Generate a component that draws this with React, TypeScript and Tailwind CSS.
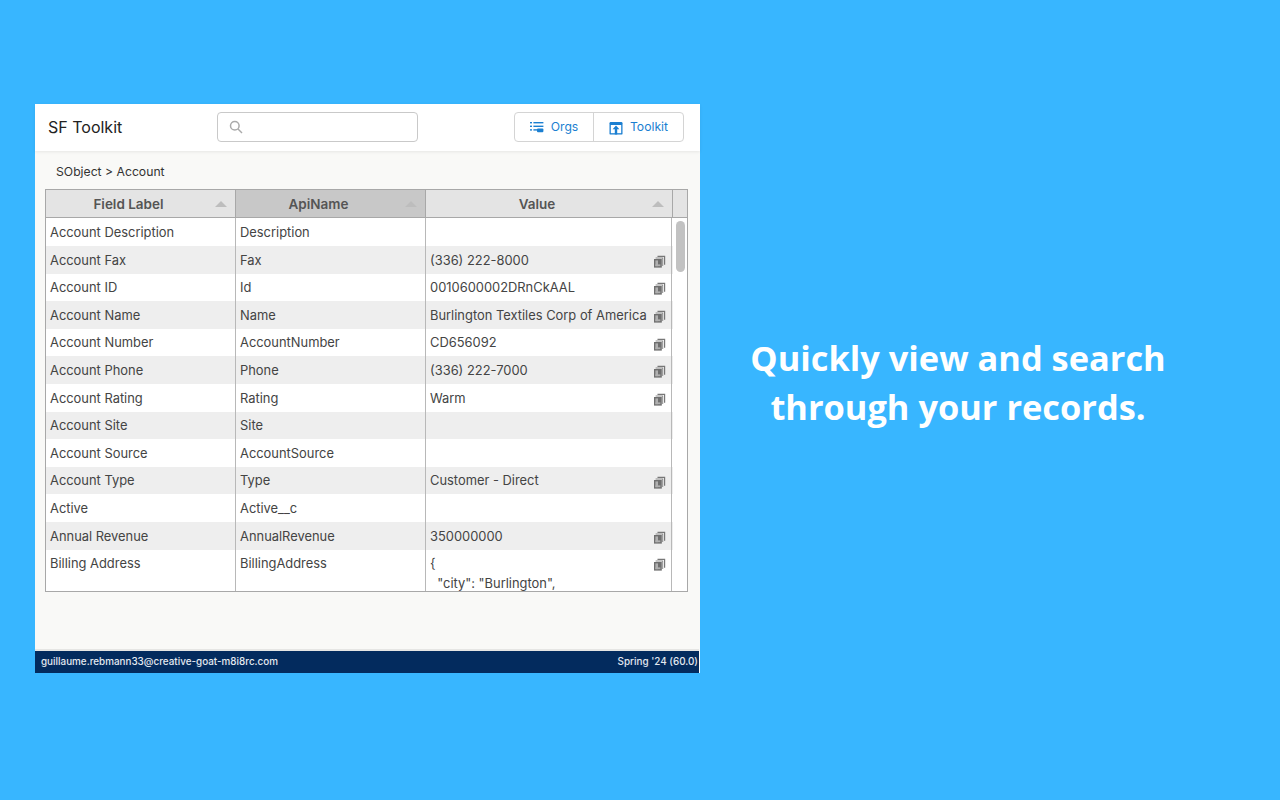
import React from "react";

const rows: [string, string, string, number][] = [
  ["Account Description", "Description", "", 28],
  ["Account Fax", "Fax", "(336) 222-8000", 27.6],
  ["Account ID", "Id", "0010600002DRnCkAAL", 27.6],
  ["Account Name", "Name", "Burlington Textiles Corp of America", 27.6],
  ["Account Number", "AccountNumber", "CD656092", 27.6],
  ["Account Phone", "Phone", "(336) 222-7000", 27.6],
  ["Account Rating", "Rating", "Warm", 27.6],
  ["Account Site", "Site", "", 27.6],
  ["Account Source", "AccountSource", "", 27.6],
  ["Account Type", "Type", "Customer - Direct", 27.6],
  ["Active", "Active__c", "", 27.6],
  ["Annual Revenue", "AnnualRevenue", "350000000", 27.6],
];

function CopyIcon() {
  return (
    <svg width="13" height="13" viewBox="0 0 13 13" className="shrink-0">
      <path d="M4.5 2V0.8h7.7v9h-1.2V2z" fill="#777" />
      <path d="M2.6 3.6V2.4h7.6v8.6H9.2V3.6z" fill="#8c8c8c" />
      <rect x="1" y="4" width="7.8" height="8.6" fill="#6f6f6f" />
      <rect x="2.4" y="5.4" width="2.6" height="5.8" fill="#b0b0b0" />
      <rect x="2.4" y="9.4" width="5" height="1.8" fill="#b0b0b0" />
    </svg>
  );
}

function OrgsIcon() {
  return (
    <svg width="14" height="12" viewBox="0 0 14 12" fill="#1b7fd1">
      <rect x="0" y="1" width="2" height="1.4" />
      <rect x="3.4" y="1" width="10" height="1.4" />
      <rect x="0" y="4.6" width="2" height="1.4" />
      <rect x="3.4" y="4.6" width="10" height="1.4" />
      <rect x="0" y="8.2" width="2" height="1.4" />
      <rect x="3.4" y="8.2" width="5" height="1.4" />
      <rect x="7" y="7.6" width="6.4" height="3.6" rx="1" />
    </svg>
  );
}

function ToolkitIcon() {
  return (
    <svg width="14" height="14" viewBox="0 0 14 14">
      <rect x="0.5" y="1" width="13" height="12.6" rx="1.2" fill="#1b7fd1" />
      <rect x="1.8" y="4" width="10.4" height="8.2" fill="#fff" />
      <path d="M7 4.6 10.4 8.2H8.2v5.4H5.8V8.2H3.6z" fill="#1b7fd1" />
    </svg>
  );
}

function SortArrow() {
  return <span className="w-0 h-0 border-x-[6px] border-x-transparent border-b-[6px] border-b-[#bdbdbd]" />;
}

function HeadCell({ label, className }: { label: string; className: string }) {
  return (
    <div className={`flex items-center justify-center relative font-semibold text-[13.5px] text-[#555] pr-[24px] pt-[1px] ${className}`}>
      {label}
      <span className="absolute right-[8px] top-[11px] flex"><SortArrow /></span>
    </div>
  );
}

export default function App() {
  return (
    <div className="w-[1280px] h-[800px] bg-[#38b6ff] flex items-start overflow-hidden font-['Inter',sans-serif]">
      <div className="ml-[35px] mt-[104px] w-[665px] h-[569px] bg-[#f9f9f7] flex flex-col shrink-0">
        <header className="h-[47px] bg-white flex items-center pl-[13px] pr-[16px] pb-[1px] shadow-[0_1px_3px_rgba(0,0,0,0.08)] shrink-0">
          <span className="text-[16px] text-[#222] w-[169px] leading-none">SF Toolkit</span>
          <div className="w-[201px] h-[30px] border border-[#c9c9c9] rounded-[4px] bg-white flex items-center pl-[11px]">
            <svg width="14" height="14" viewBox="0 0 14 14" fill="none" stroke="#aaa" strokeWidth="1.5">
              <circle cx="5.8" cy="5.8" r="4.3" />
              <path d="M9 9l4 4" />
            </svg>
          </div>
          <div className="ml-auto h-[30px] w-[170px] border border-[#d4d4d4] rounded-[4px] flex text-[12.2px] text-[#1b7fd1]">
            <div className="w-[79px] border-r border-[#d4d4d4] flex items-center justify-center gap-[7px]">
              <OrgsIcon />
              <span className="pt-[1px]">Orgs</span>
            </div>
            <div className="flex-1 flex items-center justify-center gap-[7px]">
              <span className="pt-[1px] flex"><ToolkitIcon /></span>
              <span className="pt-[1px]">Toolkit</span>
            </div>
          </div>
        </header>

        <div className="pl-[21px] pt-[13px] h-[38px] text-[12.2px] leading-[15px] text-[#333] shrink-0">SObject &gt; Account</div>

        <div className="mx-[10px] w-[643px] h-[403px] border border-[#a8a8a8] bg-white flex flex-col overflow-hidden shrink-0 mr-[12px]">
          <div className="flex h-[28px] border-b border-[#a8a8a8] shrink-0 bg-[#e4e4e4]">
            <HeadCell label="Field Label" className="w-[190px] border-r border-[#a8a8a8]" />
            <HeadCell label="ApiName" className="w-[190px] border-r border-[#a8a8a8] bg-[#c8c8c8]" />
            <HeadCell label="Value" className="w-[247px] border-r border-[#a8a8a8]" />
            <div className="flex-1" />
          </div>
          <div className="flex flex-1 min-h-0 text-[12.9px] text-[#444]">
            <div className="w-[627px] flex flex-col overflow-hidden">
              {rows.map(([label, api, value, h], i) => (
                <div
                  key={label}
                  style={{ height: h }}
                  className={`flex shrink-0 items-center ${i % 2 === 1 ? "bg-[#eeeeee]" : "bg-white"}`}
                >
                  <div className="w-[190px] h-full border-r border-[#b8b8b8] pl-[4px] pt-[1px] flex items-center">{label}</div>
                  <div className="w-[190px] h-full border-r border-[#b8b8b8] pl-[4px] pt-[1px] flex items-center">{api}</div>
                  <div className="w-[246px] h-full border-r border-[#b8b8b8] pl-[4px] pr-[5px] pt-[1px] flex items-center justify-between whitespace-nowrap">
                    <span>{value}</span>
                    {value && <span className="mt-[2px] flex"><CopyIcon /></span>}
                  </div>
                </div>
              ))}
              <div className="flex flex-1 min-h-0 bg-white">
                <div className="w-[190px] border-r border-[#b8b8b8] pl-[4px] pt-[5px] leading-[18px]">Billing Address</div>
                <div className="w-[190px] border-r border-[#b8b8b8] pl-[4px] pt-[5px] leading-[18px]">BillingAddress</div>
                <div className="w-[246px] border-r border-[#b8b8b8] pl-[4px] pr-[5px] pt-[4px] flex justify-between overflow-hidden leading-[20px]">
                  <span className="whitespace-pre">{'{\n  "city": "Burlington",'}</span>
                  <span className="mt-[4px] flex self-start"><CopyIcon /></span>
                </div>
              </div>
            </div>
            <div className="flex-1 bg-white pl-[3px] pt-[3px]">
              <div className="w-[9px] h-[51px] rounded-[5px] bg-[#c2c2c2]" />
            </div>
          </div>
        </div>

        <div className="mt-auto h-[22px] w-[664px] bg-[#032b5e] shadow-[0_-2px_0_#e6e6e4] flex items-center justify-between pl-[6px] pr-[1px] pb-[2px] text-[9.9px] font-medium text-[#e4e9f0] shrink-0">
          <span>guillaume.rebmann33@creative-goat-m8i8rc.com</span>
          <span>Spring &apos;24 (60.0)</span>
        </div>
      </div>

      <div className="w-[516px] mt-[333px] text-center text-white font-['Open_Sans',sans-serif] font-bold text-[34.4px] leading-[49px] shrink-0">
        <p>Quickly view and search</p>
        <p>through your records.</p>
      </div>
    </div>
  );
}
